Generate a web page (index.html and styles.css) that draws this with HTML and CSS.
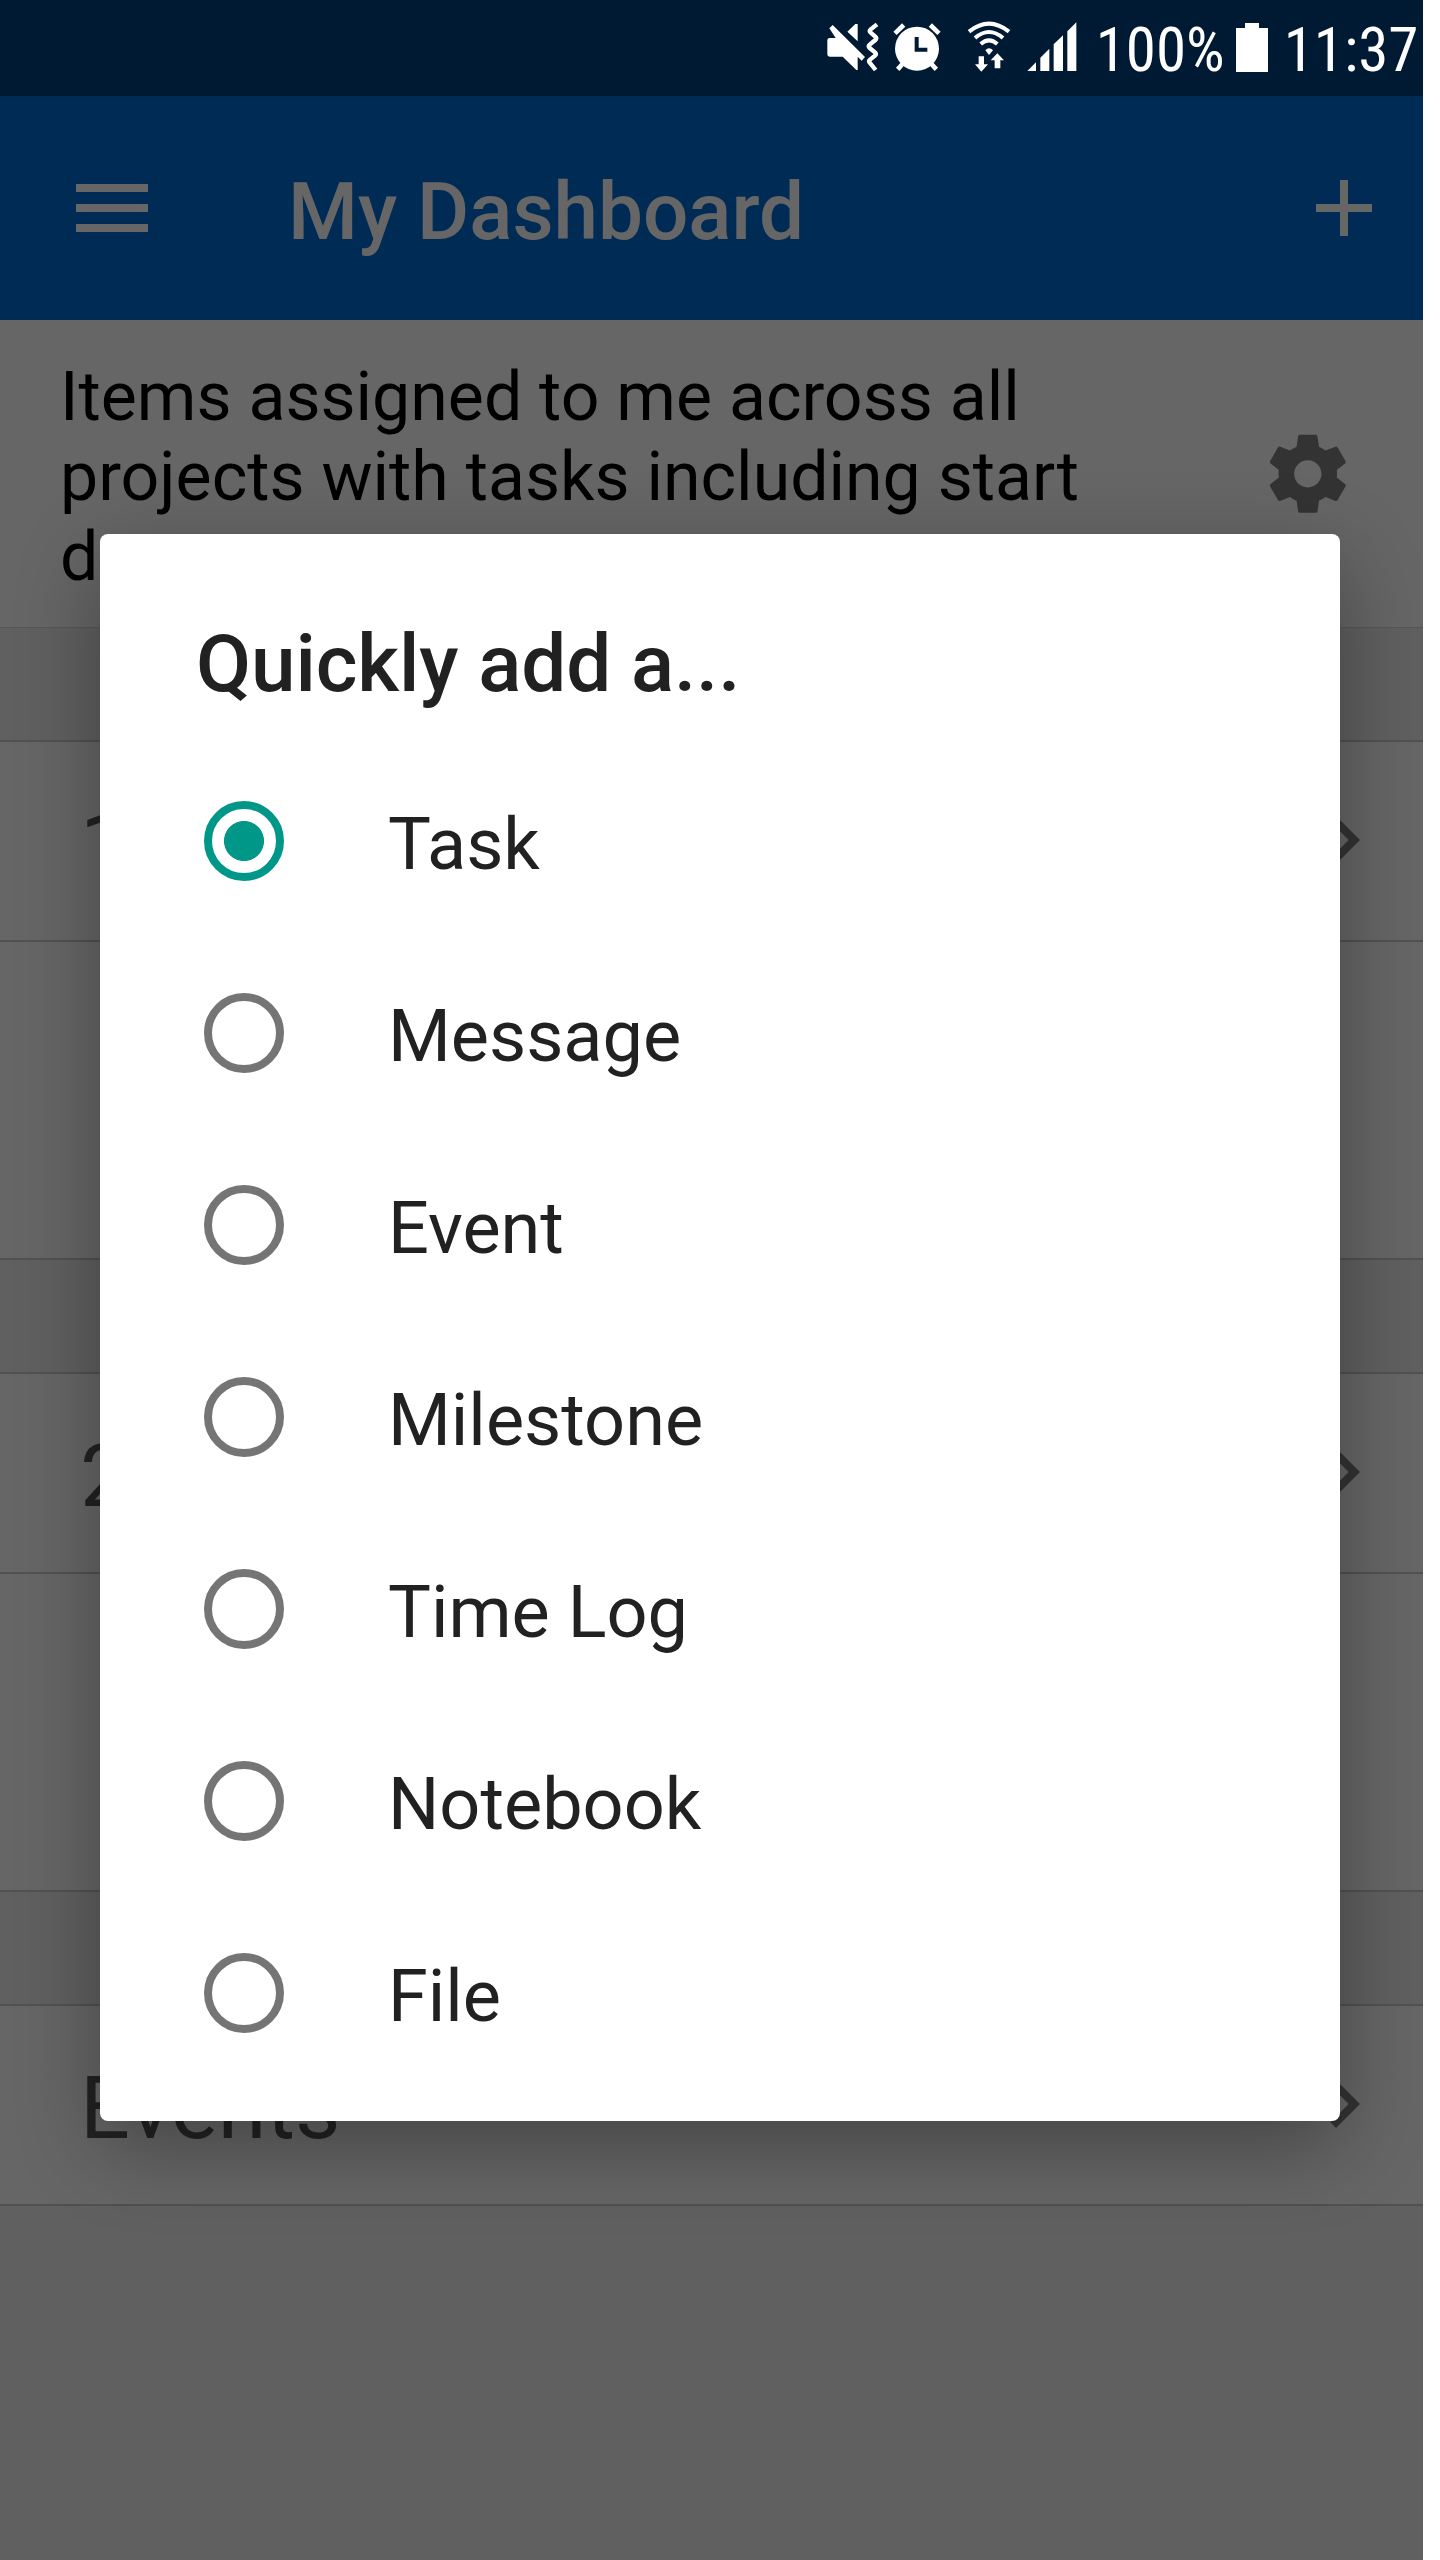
FILE: index.html
```
<!DOCTYPE html>
<html lang="en">
<head>
    <meta charset="utf-8">
    <title>My Dashboard</title>
    <link rel="stylesheet" href="styles.css">
</head>
<body>
    <div class="screen">
        <div class="status-bar">
            <svg class="mute" viewBox="80 66 156 150" width="52" height="50">
                <path d="M81 121q0-7 7-7h18L87 85l10-10 97 96-10 11-12-12v40h-4l-41-40H88q-7 0-7-7z M141 95l24-23h7v52z"/>
                <path class="line" d="M230 73l-19 15q-6 5 0 10l14 12q6 5 0 10l-17 14q-6 5 0 10l16 13q6 5 0 10l-15 12q-6 5 0 10l17 21" stroke-width="13"/>
                <path class="cut" d="M109 71l92 92" stroke-width="9"/>
            </svg>
            <svg class="alarm" viewBox="280 66 144 150" width="48" height="50">
                <circle cx="352" cy="146" r="66"/>
                <path class="line" d="M286 100l26-25M418 100l-26-25M294 208l20-22M410 208l-20-22" stroke-width="14"/>
                <path class="cut" d="M351 111v38h32" stroke-width="12"/>
            </svg>
            <svg class="wifi" viewBox="502 63 132 153" width="44" height="51">
                <path class="line" d="M508 95q60-48 120 0M526 114q42-36 84 0M543 132q25-22 50 0" stroke-width="12"/>
                <path d="M557 151q11-12 23 0l-12 14z"/>
                <path d="M537 169h16v24h12l-20 22-19-22h11zM593 160l20 21h-11v24h-17v-24h-12z"/>
            </svg>
            <svg class="signal" viewBox="680 66 150 150" width="50" height="50">
                <path d="M681 213l26-26v26zM720 213v-40l27-27v67zM760 213v-80l28-27v107zM801 213V94l27-27v146z"/>
            </svg>
            <span class="percent">100%</span>
            <svg class="battery" viewBox="0 0 32 49" width="32" height="49">
                <path d="M9 0h14v5h9v44H0V5h9z"/>
            </svg>
            <span class="clock">11:37</span>
        </div>

        <div class="app">
            <div class="app-bar">
                <svg class="icon" viewBox="0 0 24 24"><path d="M3 18h18v-2H3v2zm0-5h18v-2H3v2zm0-7v2h18V6H3z"/></svg>
                <h1>My Dashboard</h1>
                <svg class="icon" viewBox="0 0 24 24"><path d="M19 13h-6v6h-2v-6H5v-2h6V5h2v6h6v2z"/></svg>
            </div>
            <div class="filter">
                <p>Items assigned to me across all projects with tasks including start dates</p>
                <svg class="gear" viewBox="0 0 24 24"><path d="M19.43 12.98c.04-.32.07-.64.07-.98s-.03-.66-.07-.98l2.11-1.65c.19-.15.24-.42.12-.64l-2-3.46c-.12-.22-.39-.3-.61-.22l-2.49 1c-.52-.4-1.08-.73-1.69-.98l-.38-2.65C14.46 2.18 14.25 2 14 2h-4c-.25 0-.46.18-.49.42l-.38 2.65c-.61.25-1.17.59-1.69.98l-2.49-1c-.23-.09-.49 0-.61.22l-2 3.46c-.13.22-.07.49.12.64l2.11 1.65c-.04.32-.07.65-.07.98s.03.66.07.98l-2.11 1.65c-.19.15-.24.42-.12.64l2 3.46c.12.22.39.3.61.22l2.49-1c.52.4 1.08.73 1.69.98l.38 2.65c.03.24.24.42.49.42h4c.25 0 .46-.18.49-.42l.38-2.65c.61-.25 1.17-.59 1.69-.98l2.49 1c.23.09.49 0 .61-.22l2-3.46c.12-.22.07-.49-.12-.64l-2.11-1.65zM12 15.5c-1.93 0-3.5-1.57-3.5-3.5s1.57-3.5 3.5-3.5 3.5 1.57 3.5 3.5-1.57 3.5-3.5 3.5z"/></svg>
            </div>
            <div class="group">
                <div class="row">
                    <span>1</span>
                    <svg class="icon" viewBox="0 0 24 24"><path d="M10 6L8.59 7.41 13.17 12l-4.58 4.59L10 18l6-6z"/></svg>
                </div>
                <div class="row-body"></div>
            </div>
            <div class="group">
                <div class="row">
                    <span>2</span>
                    <svg class="icon" viewBox="0 0 24 24"><path d="M10 6L8.59 7.41 13.17 12l-4.58 4.59L10 18l6-6z"/></svg>
                </div>
                <div class="row-body"></div>
            </div>
            <div class="group">
                <div class="row">
                    <span>Events</span>
                    <svg class="icon" viewBox="0 0 24 24"><path d="M10 6L8.59 7.41 13.17 12l-4.58 4.59L10 18l6-6z"/></svg>
                </div>
            </div>
        </div>

        <div class="overlay">
            <div class="dialog">
                <h2>Quickly add a...</h2>
                <div class="option selected"><i class="radio"></i><span>Task</span></div>
                <div class="option"><i class="radio"></i><span>Message</span></div>
                <div class="option"><i class="radio"></i><span>Event</span></div>
                <div class="option"><i class="radio"></i><span>Milestone</span></div>
                <div class="option"><i class="radio"></i><span>Time Log</span></div>
                <div class="option"><i class="radio"></i><span>Notebook</span></div>
                <div class="option"><i class="radio"></i><span>File</span></div>
            </div>
        </div>
    </div>
</body>
</html>
```
FILE: styles.css
```
* { box-sizing: border-box; }
body { margin: 0; background: #fff; font-family: Roboto, sans-serif; }
h1, h2, p { margin: 0; }
svg { display: block; flex: none; }

.screen { position: relative; width: 1422.5px; height: 2560px; overflow: hidden; display: flex; flex-direction: column; }

/* status bar */
.status-bar { height: 96px; flex: none; display: flex; align-items: flex-start; padding: 22px 0 0 826.7px; background: #001a33; color: #fff; }
.status-bar svg { fill: #fff; }
.status-bar .line { fill: none; stroke: #fff; }
.status-bar .cut { fill: none; stroke: #001a33; }
.status-bar span { font-family: "Roboto Condensed", Roboto, sans-serif; font-stretch: 75%; font-size: 61px; line-height: 72px; margin-top: -8px; white-space: nowrap; }
.alarm { margin-left: 14.6px; }
.wifi { margin-left: 26px; margin-top: -1px; }
.signal { margin-left: 15.4px; }
.percent { width: 140px; margin-left: 19px; }
.battery { margin-top: 1px; }
.clock { margin-left: 16px; }

/* page */
.app { flex: 1; background: #f0f0f0; }
.icon { width: 96px; height: 96px; }
.app-bar { height: 224px; display: flex; align-items: center; padding: 0 30.5px 0 64px; background: #006cd5; color: #fff; fill: #fff; }
.app-bar h1 { flex: 1; padding: 8px 0 0 128px; font-size: 80px; font-weight: 500; line-height: 94px; }
.filter { height: 308px; display: flex; justify-content: space-between; padding: 37px 67.5px 0 60px; background: #fff; border-bottom: 1px solid #dcdcdc; }
.filter p { width: 1080px; height: 240px; font-size: 68px; line-height: 80px; color: #000; }
.gear { width: 93.6px; height: 93.6px; margin-top: 70px; fill: #808080; }
.group { padding-top: 112px; }
.row { height: 202px; display: flex; align-items: center; justify-content: space-between; padding: 0 30.5px 0 80px; background: #fff; border-top: 2px solid #cacaca; border-bottom: 2px solid #cacaca; }
.row span { padding-top: 5px; font-size: 88px; line-height: 104px; color: #555; }
.row .icon { fill: #808080; margin-bottom: 2px; }
.row-body { height: 318px; background: #fff; border-bottom: 2px solid #cacaca; }

/* dialog */
.overlay { position: absolute; top: 96px; right: 0; bottom: 0; left: 0; background: rgba(0, 0, 0, 0.6); padding: 438px 0 0 100px; }
.dialog { width: 1240px; height: 1587px; background: #fff; border-radius: 8px; box-shadow: 0 26px 84px rgba(0, 0, 0, 0.33); color: #212121; }
.dialog h2 { height: 211px; padding: 83px 0 0 96px; font-size: 80px; font-weight: 500; line-height: 94px; letter-spacing: -0.1px; }
.option { height: 192px; display: flex; align-items: center; padding-left: 104px; }
.option span { padding: 8px 0 0 104px; font-size: 72px; line-height: 84px; }
.radio { width: 80px; height: 80px; border: 8px solid #757575; border-radius: 50%; }
.selected .radio { border-color: #009688; background: radial-gradient(circle, #009688 19.6px, #fff 20.4px); }
```
